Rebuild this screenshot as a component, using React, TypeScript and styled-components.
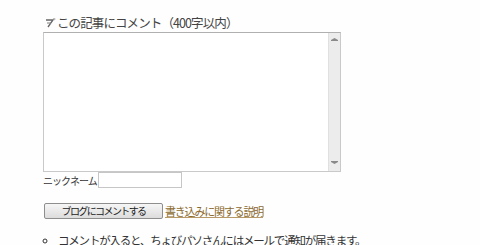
import styled, { createGlobalStyle } from 'styled-components'

const Global = createGlobalStyle`
  body {
    margin: 0;
    background: #fefefe;
    font-family: "Noto Sans CJK JP", "DejaVu Sans", sans-serif;
    color: #333;
  }
`

const Wrapper = styled.div`
  padding: 14px 0 0 43px;
  width: 437px;
  height: 245px;
  box-sizing: border-box;
  overflow: hidden;
`

const Heading = styled.div`
  display: flex;
  align-items: center;
  gap: 1px;
  font-size: 12.5px;
  line-height: 17px;
  color: #444;
  padding-left: 2px;
  letter-spacing: -0.9px;
`

const CommentFrame = styled.div`
  display: flex;
  width: 298px;
  height: 140px;
  margin-top: 1px;
  box-sizing: border-box;
  border: 1px solid #c9c9c9;
  border-top-color: #b0b0b0;
  background: #fff;
`

const CommentBox = styled.textarea`
  flex: 1;
  border: none;
  outline: none;
  resize: none;
  background: transparent;
`

const ScrollTrack = styled.div`
  width: 11px;
  background: #ececec;
  border-left: 1px solid #e0e0e0;
  display: flex;
  flex-direction: column;
  justify-content: space-between;
  align-items: center;
  padding: 4px 0 6px;
`

const NickRow = styled.div`
  display: flex;
  align-items: center;
  gap: 1px;
  font-size: 10px;
  letter-spacing: -1px;
  color: #333;
`

const NickInput = styled.input`
  width: 84px;
  height: 16px;
  box-sizing: border-box;
  border: 1px solid #c6c6c6;
  background: #fff;
  padding: 0;
`

const ActionRow = styled.div`
  display: flex;
  align-items: center;
  gap: 2px;
  margin-top: 15px;
  padding-left: 1px;
`

const SubmitButton = styled.button`
  width: 119px;
  height: 16px;
  box-sizing: border-box;
  border: 1px solid #8e8e8e;
  border-radius: 2px;
  background: linear-gradient(#f6f6f6, #dcdcdc);
  font-family: inherit;
  font-size: 10px;
  line-height: 12px;
  color: #222;
  padding: 0;
  letter-spacing: -1.6px;
`

const HelpLink = styled.a`
  font-size: 11px;
  color: #8c6a2e;
  text-decoration: underline;
  text-decoration-color: #b89a68;
  letter-spacing: -1.2px;
`

const Notes = styled.ul`
  margin: 13px 0 0 0;
  padding: 0 0 0 15px;
  list-style: circle;
  font-size: 11.5px;
  letter-spacing: -1.2px;
  color: #333;
`

const PenIcon = () => (
  <svg width="11" height="10" viewBox="0 0 11 10">
    <path d="M1 2 H8 L3 9" stroke="#666" strokeWidth="1.3" fill="none" />
    <path d="M2 5 H6" stroke="#888" strokeWidth="1.1" fill="none" />
    <path d="M8 1 L10 0 M9 2 L10.5 1" stroke="#999" strokeWidth="0.8" />
  </svg>
)

const ArrowMark = ({ down }: { down?: boolean }) => (
  <svg width="7" height="5" viewBox="0 0 7 5">
    <path
      d={down ? 'M0 1 H7 V2 L3.5 4 L0 2 Z' : 'M0 4 H7 V3 L3.5 1 L0 3 Z'}
      fill="#8a8a8a"
    />
  </svg>
)

export default function App() {
  return (
    <Wrapper>
      <Global />
      <Heading>
        <PenIcon />
        この記事にコメント（400字以内）
      </Heading>
      <CommentFrame>
        <CommentBox />
        <ScrollTrack>
          <ArrowMark />
          <ArrowMark down />
        </ScrollTrack>
      </CommentFrame>
      <NickRow>
        ニックネーム
        <NickInput />
      </NickRow>
      <ActionRow>
        <SubmitButton>ブログにコメントする</SubmitButton>
        <HelpLink href="#">書き込みに関する説明</HelpLink>
      </ActionRow>
      <Notes>
        <li>コメントが入ると、ちょびパソさんにはメールで通知が届きます。</li>
      </Notes>
    </Wrapper>
  )
}
